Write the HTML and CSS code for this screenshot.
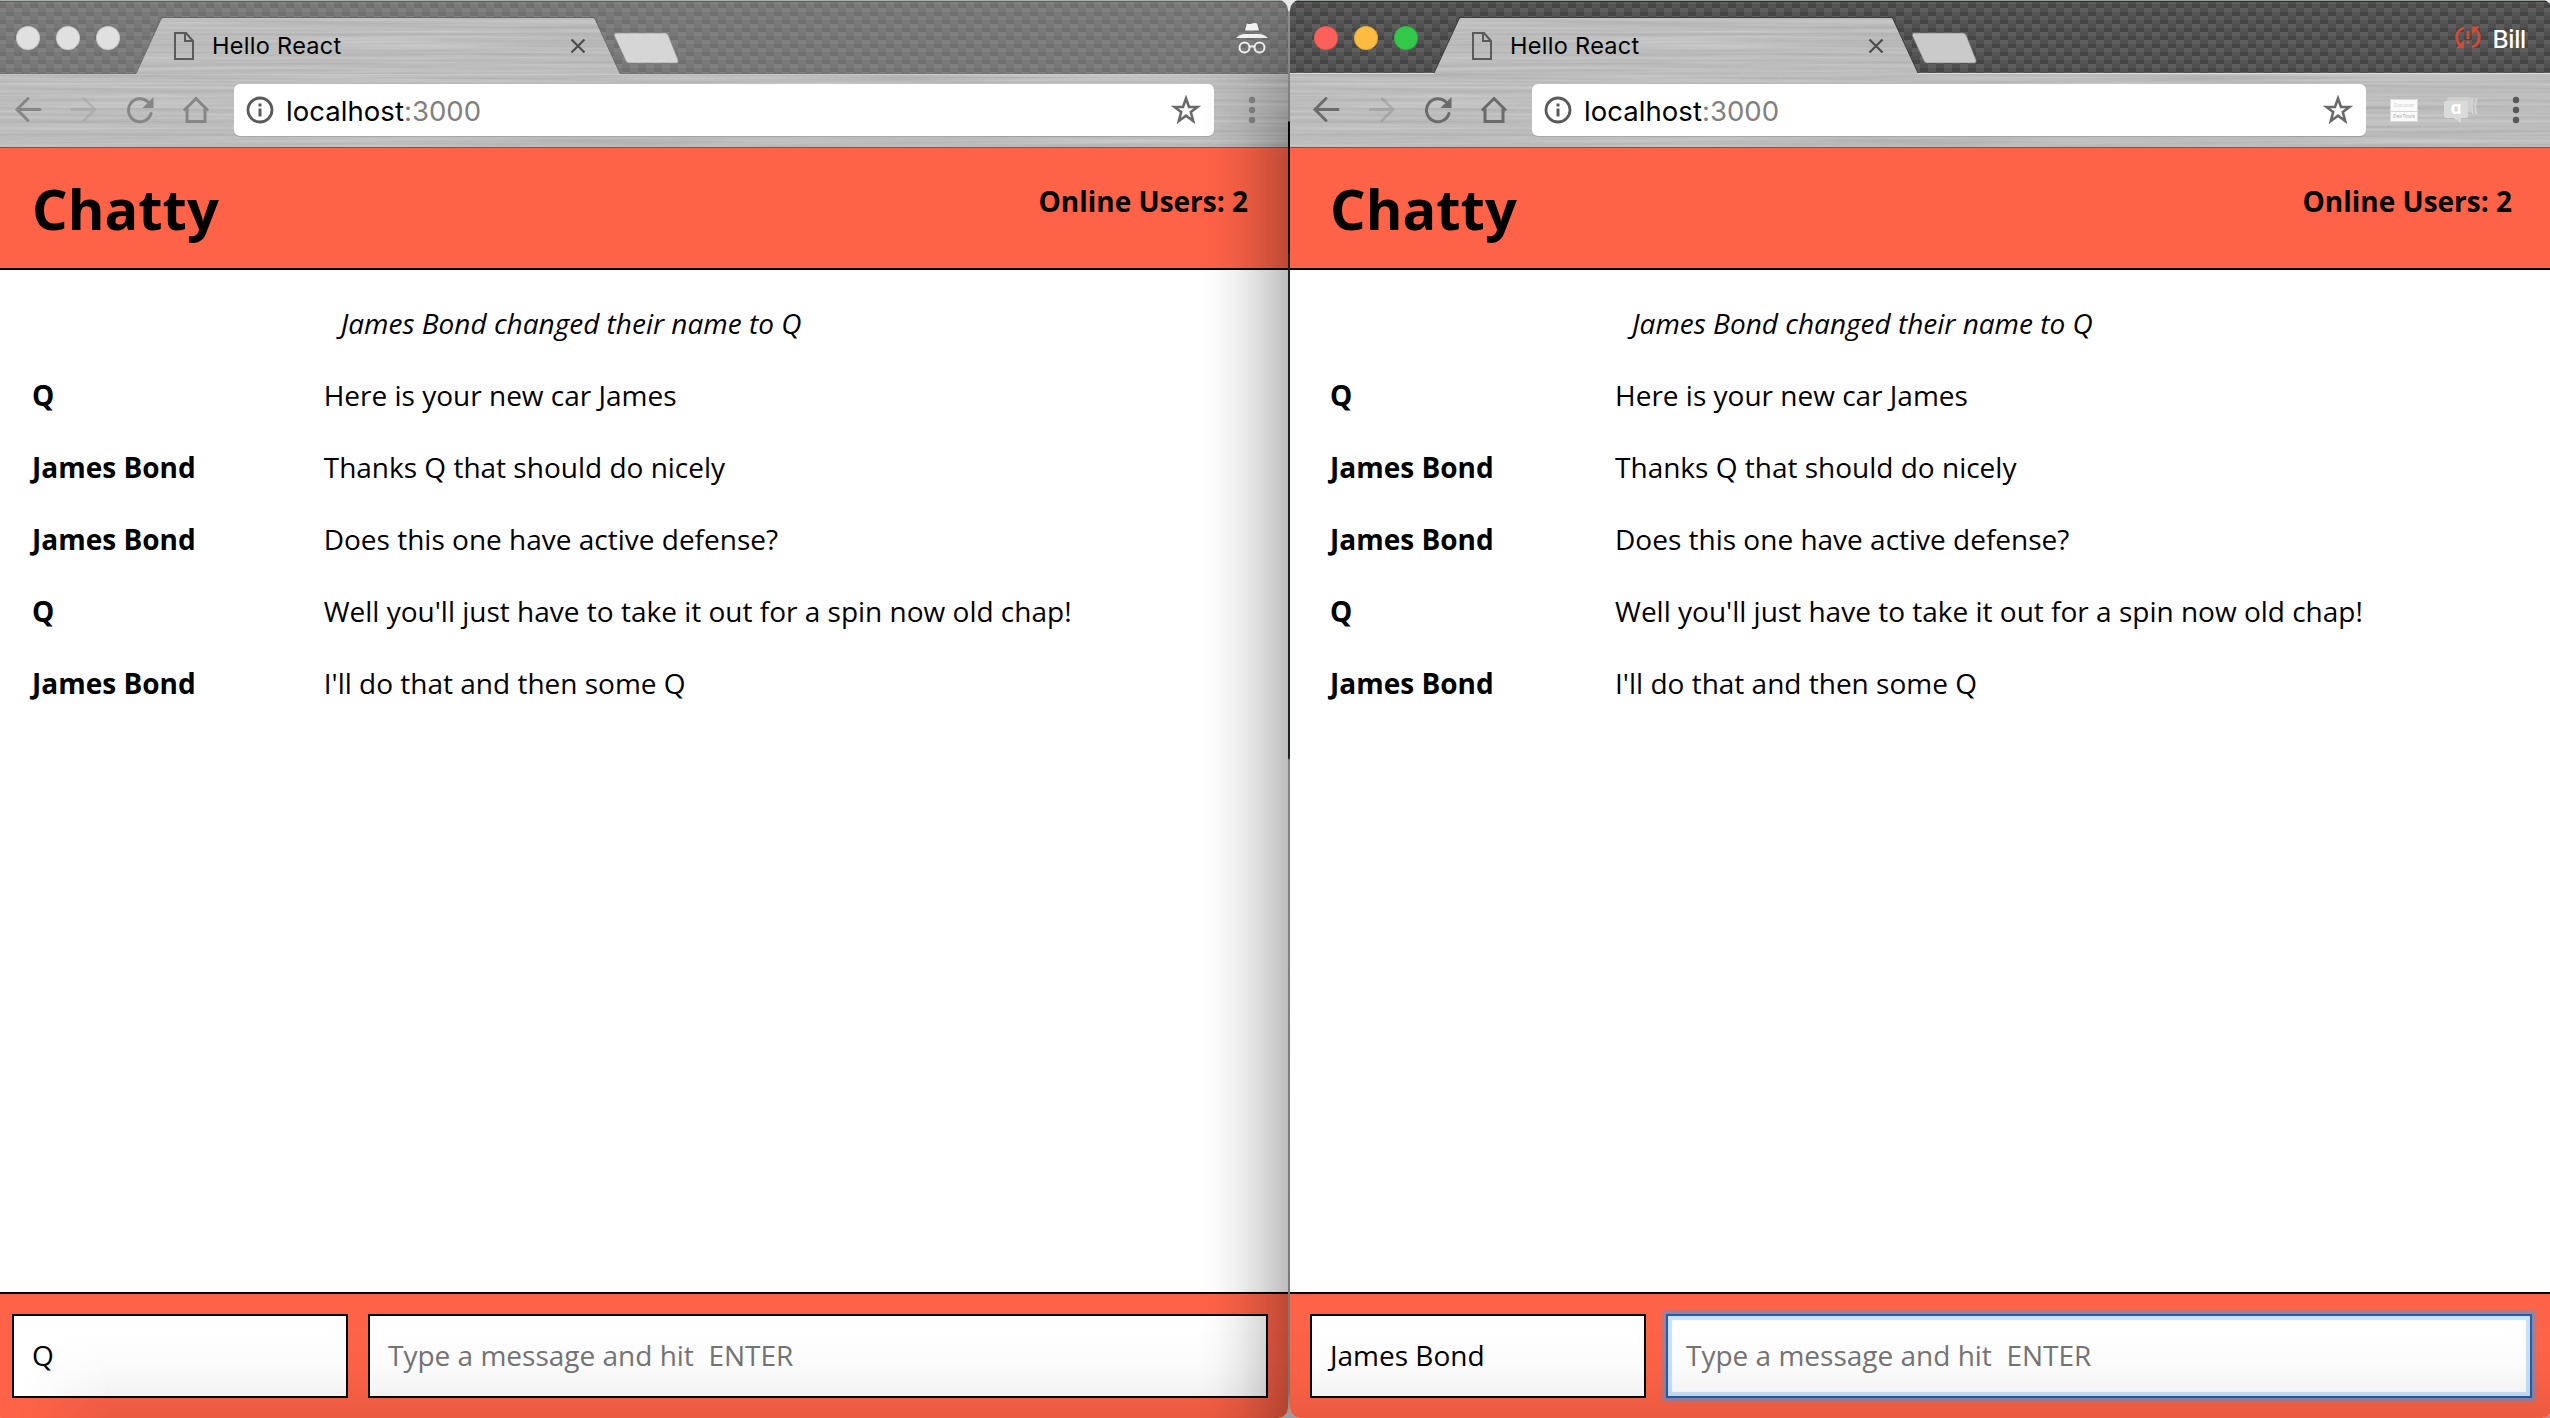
FILE: index.html
```
<!DOCTYPE html>
<html lang="en">
<head>
<meta charset="utf-8">
<title>Hello React</title>
<link rel="stylesheet" href="styles.css">
</head>
<body>
<svg class="defs" width="0" height="0">
  <defs>
    <filter id="metal" x="0" y="0" width="100%" height="100%" color-interpolation-filters="sRGB">
      <feTurbulence type="fractalNoise" baseFrequency="0.004 0.3" numOctaves="3" seed="4"/>
      <feColorMatrix values="0 0 0 .15 .665  0 0 0 .15 .665  0 0 0 .15 .665  0 0 0 0 1"/>
    </filter>
    <pattern id="weave" x="14" y="0" width="16" height="16" patternUnits="userSpaceOnUse">
      <rect width="16" height="16" fill="#555"/>
      <rect width="8" height="4" fill="#5e5e5e"/><rect y="8" width="8" height="4" fill="#505050"/><rect y="12" width="8" height="4" fill="#454545"/>
      <rect x="8" y="8" width="8" height="4" fill="#5e5e5e"/><rect x="8" width="8" height="4" fill="#505050"/><rect x="8" y="4" width="8" height="4" fill="#454545"/>
    </pattern>
    <pattern id="weave-dim" x="14" y="0" width="16" height="16" patternUnits="userSpaceOnUse">
      <rect width="16" height="16" fill="#7a7a7a"/>
      <rect width="8" height="4" fill="#818181"/><rect y="8" width="8" height="4" fill="#777"/><rect y="12" width="8" height="4" fill="#6f6f6f"/>
      <rect x="8" y="8" width="8" height="4" fill="#818181"/><rect x="8" width="8" height="4" fill="#777"/><rect x="8" y="4" width="8" height="4" fill="#6f6f6f"/>
    </pattern>
    <symbol id="page" viewBox="0 0 20 28"><path d="M1 1H12L19 9V27H1ZM11 1V9H19" fill="none" stroke="#5a5a5a" stroke-width="2"/></symbol>
    <symbol id="close" viewBox="0 0 16 16"><path d="M1.500 1.500L14.500 14.500M14.500 1.500L1.500 14.500" stroke="#4c4c4c" stroke-width="2.200"/></symbol>
    <symbol id="back" viewBox="0 0 28 28"><path d="M26 13.500H3M14 2.500L3 13.500L14 24.500" fill="none" stroke="currentColor" stroke-width="3" stroke-linecap="round"/></symbol>
    <symbol id="reload" viewBox="0 0 28 28"><path d="M25 17.500A11.500 11.500 0 1 1 22 6" fill="none" stroke="currentColor" stroke-width="3" stroke-linecap="round"/><path d="M27.500 1V12H16.500Z" fill="currentColor"/></symbol>
    <symbol id="home" viewBox="0 0 28 28"><path d="M2 14.500L14 2.500L26 14.500M5 12.500V25.500H23V12.500" fill="none" stroke="currentColor" stroke-width="3"/></symbol>
    <symbol id="info" viewBox="0 0 28 28"><circle cx="14" cy="14" r="12" fill="none" stroke="#5a5a5a" stroke-width="2.800"/><path d="M12.500 7.500h3v3h-3zM12.500 12.500h3V20.500h-3z" fill="#5a5a5a"/></symbol>
    <symbol id="star" viewBox="0 0 30 30"><path d="M15 3.500L18 12H26.500L19.800 17L22.200 26L15 20.700L7.800 26L10.200 17L3.500 12H12Z" fill="none" stroke="#6a6a6a" stroke-width="2.600"/></symbol>
    <symbol id="dots" viewBox="0 0 8 28"><g fill="currentColor"><circle cx="4" cy="4" r="3.200"/><circle cx="4" cy="14" r="3.200"/><circle cx="4" cy="24" r="3.200"/></g></symbol>
  </defs>
</svg>
<div class="desktop">

<section class="window window-back">
  <div class="chrome">
    <svg class="chrome-skin" width="1296" height="147">
      <rect width="1296" height="147" filter="url(#metal)"/>
      <path d="M0 0H1296V73H628L603 19Q602.500 18 601 18H171Q169.500 18 169 19L144 73H0Z" fill="url(#weave-dim)"/>
      <path d="M0 73.500H144L169 19Q169.500 17.500 171 17.500H601Q602.500 17.500 603 19L628 73.500H1296" fill="none" stroke="#606060" stroke-opacity=".8"/>
      <path d="M0 74.500H1296" stroke="#cfcfcf" stroke-opacity=".6"/>
      <path d="M0 .5H1296" stroke="#a9afab"/><path d="M0 1.500H1296" stroke="#5b605d"/>
      <path d="M625 33H673Q675.500 33 676.500 36L686 60Q687 63 684 63H637Q634.500 63 633.500 60L622.500 36Q621.500 33 625 33Z" fill="#d6d6d6" stroke="#8b8b8b" stroke-width=".6"/>
    </svg>
    <div class="tabstrip">
      <div class="lights"><i></i><i></i><i></i></div>
      <div class="tab"><svg class="page"><use href="#page"/></svg><span class="tab-title">Hello React</span><svg class="close"><use href="#close"/></svg></div>
      <svg class="incognito" viewBox="0 0 32 32"><g fill="#fafafa"><path d="M11 1.500Q13.500 2.500 16 1.500Q18.500 .5 21 1.500L23 8.500H9ZM0 16Q4 12 9 12H23Q28 12 32 16Z"/></g><g fill="none" stroke="#fafafa" stroke-width="2"><circle cx="8.500" cy="25.500" r="5"/><circle cx="23.500" cy="25.500" r="5"/><path d="M13.500 25Q16 23.500 18.500 25"/></g></svg>
    </div>
    <div class="toolbar">
      <svg class="nav"><use href="#back"/></svg><svg class="nav forward"><use href="#back"/></svg><svg class="nav"><use href="#reload"/></svg><svg class="nav"><use href="#home"/></svg>
      <div class="omnibox"><svg class="info"><use href="#info"/></svg><span class="url">localhost<span class="port">:3000</span></span><svg class="star"><use href="#star"/></svg></div>
      <svg class="dots"><use href="#dots"/></svg>
    </div>
  </div>
  <header class="header"><h1 class="brand">Chatty</h1><span class="online">Online Users: 2</span></header>
  <main class="messages">
    <div class="system">James Bond changed their name to Q</div>
    <div class="message"><span class="user">Q</span><span class="content">Here is your new car James</span></div>
    <div class="message"><span class="user">James Bond</span><span class="content">Thanks Q that should do nicely</span></div>
    <div class="message"><span class="user">James Bond</span><span class="content">Does this one have active defense?</span></div>
    <div class="message"><span class="user">Q</span><span class="content">Well you'll just have to take it out for a spin now old chap!</span></div>
    <div class="message"><span class="user">James Bond</span><span class="content">I'll do that and then some Q</span></div>
  </main>
  <footer class="chatbar"><div class="field name">Q</div><div class="field compose">Type a message and hit  ENTER</div></footer>
  <div class="side-shade"></div>
</section>

<section class="window window-front">
  <div class="chrome">
    <svg class="chrome-skin" width="1262" height="147">
      <rect width="1262" height="147" filter="url(#metal)"/>
      <path d="M0 0H1262V73H628L603 19Q602.500 18 601 18H171Q169.500 18 169 19L144 73H0Z" fill="url(#weave)"/>
      <path d="M144 73L169 19Q169.500 17.500 171 17.500H601Q602.500 17.500 603 19L628 73" fill="none" stroke="#3c3c3c"/>
      <path d="M0 73.500H144M628 73.500H1262" stroke="#dcdcdc"/>
      <path d="M0 .5H1262" stroke="#969c98"/><path d="M0 1.500H1262" stroke="#2b302d"/>
      <path d="M625 33H673Q675.500 33 676.500 36L686 60Q687 63 684 63H637Q634.500 63 633.500 60L622.500 36Q621.500 33 625 33Z" fill="#cacaca" stroke="#777" stroke-width=".6"/>
    </svg>
    <div class="tabstrip">
      <div class="lights"><i></i><i></i><i></i></div>
      <div class="tab"><svg class="page"><use href="#page"/></svg><span class="tab-title">Hello React</span><svg class="close"><use href="#close"/></svg></div>
      <div class="profile"><svg class="sync" viewBox="0 0 26 24"><g fill="none" stroke="#d34a36" stroke-width="2.800"><path d="M9 1.800C0 4.500 0 14.500 5.500 19.500M17 21C26 18.500 26 8 20.500 3.500"/><path d="M13 5V13M13 15V17.800"/></g><path d="M1 22H9V14ZM25 .5H17V8.500Z" fill="#d34a36"/></svg><span>Bill</span></div>
    </div>
    <div class="toolbar">
      <svg class="nav"><use href="#back"/></svg><svg class="nav forward"><use href="#back"/></svg><svg class="nav"><use href="#reload"/></svg><svg class="nav"><use href="#home"/></svg>
      <div class="omnibox"><svg class="info"><use href="#info"/></svg><span class="url">localhost<span class="port">:3000</span></span><svg class="star"><use href="#star"/></svg></div>
      <div class="devtools"><span>Discover</span><span>DevTools</span></div>
      <svg class="bubbles" viewBox="0 0 34 28"><path d="M5 1H26Q28 1 28 3V16H3V3Q3 1 5 1Z" fill="#cfcfcf"/><path d="M2 5H22Q24 5 24 7V20Q24 22 22 22H17V27L10 22H2Q0 22 0 20V7Q0 5 2 5Z" fill="#dadada"/><path d="M29 2Q27 10 29 18M32.500 2Q30 10 32.500 18" fill="none" stroke="#d6d6d6" stroke-width="1.800"/><text x="12" y="18" text-anchor="middle">ɑ</text></svg>
      <svg class="dots"><use href="#dots"/></svg>
    </div>
  </div>
  <header class="header"><h1 class="brand">Chatty</h1><span class="online">Online Users: 2</span></header>
  <main class="messages">
    <div class="system">James Bond changed their name to Q</div>
    <div class="message"><span class="user">Q</span><span class="content">Here is your new car James</span></div>
    <div class="message"><span class="user">James Bond</span><span class="content">Thanks Q that should do nicely</span></div>
    <div class="message"><span class="user">James Bond</span><span class="content">Does this one have active defense?</span></div>
    <div class="message"><span class="user">Q</span><span class="content">Well you'll just have to take it out for a spin now old chap!</span></div>
    <div class="message"><span class="user">James Bond</span><span class="content">I'll do that and then some Q</span></div>
  </main>
  <footer class="chatbar"><div class="field name">James Bond</div><div class="field compose focused">Type a message and hit  ENTER</div></footer>
</section>
<div class="floor-shade"></div>
</div>
</body>
</html>
```
FILE: styles.css
```
* { box-sizing: border-box; }
body { margin: 0; overflow: hidden; font-family: "Open Sans", sans-serif; font-size: 28px; color: #000; }
.defs { position: absolute; }
.desktop {
  position: relative; display: flex; gap: 2px; width: 2550px; height: 1418px; overflow: hidden;
  background: linear-gradient(#e8e8e8 10px, #8d8d8d 12px, #7d7d7d 121px, #050505 122px, #050505 253px, #1d2224 254px, #1d2224 758px, #858585 760px, #777 1390px, #aaa 1412px);
}
.window { position: relative; flex: none; display: flex; flex-direction: column; height: 1418px; overflow: hidden; border-radius: 10px; background: #fff; }
.window-back { width: 1296px; margin-left: -8px; --icon: #868686; --light1: #e0e0e0; --light2: #e0e0e0; --light3: #e0e0e0; }
.window-front { width: 1262px; --icon: #6b6b6b; --light1: #fc605b; --light2: #fdbc40; --light3: #34c84a; }

.chrome { position: relative; height: 148px; border-bottom: 1px solid #5c6270; font-family: Inter, sans-serif; }
.chrome-skin { position: absolute; left: 0; top: 0; }
.tabstrip { position: relative; display: flex; height: 74px; padding-left: 24px; }
.lights { display: flex; gap: 16px; width: 158px; padding-top: 26px; }
.lights i { width: 24px; height: 24px; border-radius: 50%; box-shadow: inset 0 0 0 1px rgba(0,0,0,.1); }
.lights i:nth-child(1) { background: var(--light1); }
.lights i:nth-child(2) { background: var(--light2); }
.lights i:nth-child(3) { background: var(--light3); }
.tab { display: flex; align-items: center; width: 412px; padding-top: 18px; }
.page { width: 20px; height: 28px; margin-right: 18px; }
.tab-title { font-size: 23.500px; letter-spacing: .3px; line-height: 28px; }
.close { width: 16px; height: 16px; margin-left: auto; }
.incognito { width: 32px; height: 32px; margin: 22px 20px 0 auto; }
.profile { display: flex; gap: 12px; margin: 23px 26px 0 auto; color: #fff; font-size: 24.500px; font-weight: 500; line-height: 32px; letter-spacing: -.3px; }
.sync { width: 26px; height: 24px; margin-top: 3px; }
.toolbar { position: relative; display: flex; align-items: center; height: 73px; padding: 0 32px 1px 22px; color: var(--icon); }
.nav { flex: none; width: 28px; height: 28px; margin-right: 28px; }
.forward { transform: scaleX(-1); opacity: .25; }
.omnibox { display: flex; flex: 1; align-items: center; height: 52px; margin-right: 34px; margin-left: -4px; padding: 0 13px 0 12px; border-radius: 6px; background: #fff; box-shadow: 0 1px 0 rgba(0,0,0,.12); }
.info { width: 28px; height: 28px; margin-right: 12px; }
.url { padding-top: 2px; color: #000; font-size: 27.500px; line-height: 34px; letter-spacing: .05px; }
.port { color: #808080; }
.star { width: 30px; height: 30px; margin-left: auto; }
.dots { width: 8px; height: 28px; }
.window-front .dots { color: #585858; }
.window-front .omnibox { margin-right: 24px; }
.devtools { width: 28px; height: 23px; margin-right: 26px; border: 1px solid #dadada; background: #fafafa; color: #d4d4d4; font-size: 5px; line-height: 11px; text-align: center; }
.devtools span { display: block; height: 11px; }
.devtools span + span { border-top: 1px solid #d4d4d4; color: #aaa; line-height: 9px; }
.bubbles { width: 34px; height: 28px; margin-right: 34px; }
.bubbles text { fill: #fff; font-size: 17px; font-weight: 700; }

.header { display: flex; justify-content: space-between; height: 122px; padding: 22px 40px 0 40px; border-bottom: 2px solid #000; background: #ff6347; }
.brand { margin: 0; font-size: 56px; font-weight: 700; line-height: 76px; }
.online { padding-top: 12px; font-weight: 700; line-height: 38px; }
.messages { flex: 1; padding: 17px 40px 0; }
.message, .system { display: flex; align-items: center; height: 72px; line-height: 38px; white-space: nowrap; }
.user { width: calc(16.67% + 88px); font-weight: 700; }
.system { padding-left: calc(16.67% + 105px); font-style: italic; }
.window-back .content, .window-back .system { margin-left: 1px; }
.chatbar { display: flex; gap: 20px; height: 126px; padding: 20px; border-top: 2px solid #000; background: #ff6347; }
.field { width: 336px; height: 84px; padding: 20px 18px; border: 2px solid #000; background: #fff; line-height: 38px; white-space: pre; }
.compose { flex: 1; color: #757575; }
.focused { border-color: #2160a3; box-shadow: 0 0 3px 3px rgba(90,150,220,.75), inset 0 0 1px 4px #c9e0fa; }

.side-shade { position: absolute; top: 0; right: 0; width: 90px; height: 1418px; background: linear-gradient(to left, rgba(0,0,0,.26), rgba(0,0,0,.17) 20px, rgba(0,0,0,.07) 47px, rgba(0,0,0,.015) 72px, transparent); mask-image: linear-gradient(rgba(0,0,0,.15), #000 160px); }
.floor-shade { position: absolute; left: 0; bottom: 0; width: 2550px; height: 90px; background: linear-gradient(transparent, rgba(0,0,0,.015) 45%, rgba(0,0,0,.08)); mask-image: linear-gradient(to right, transparent 20px, #000 110px); }
```
